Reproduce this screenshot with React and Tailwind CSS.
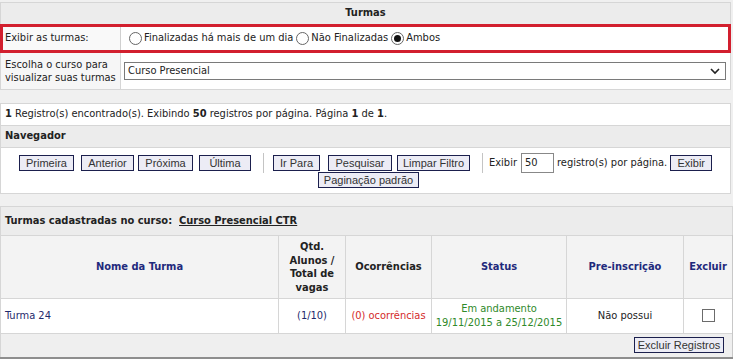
import React from "react";

const Btn = ({ children, className = "" }) => (
  <button
    className={
      "h-[16px] shrink-0 whitespace-nowrap border border-[#1b1f4d] bg-[#ececf5] text-[#333] font-['Liberation_Sans',Arial,sans-serif] text-[11px] leading-none " +
      className
    }
  >
    {children}
  </button>
);

const Radio = ({ checked }) => (
  <span className="grid place-items-center w-[13px] h-[13px] rounded-full border border-[#666] bg-white shrink-0">
    {checked && <span className="w-[7px] h-[7px] rounded-full bg-[#111]" />}
  </span>
);

const Sep = () => <span className="block w-px h-[20px] bg-[#c4c4c4]" />;

export default function App() {
  return (
    <div className="w-[733px] h-[359px] overflow-hidden bg-[#f0f0f0] font-['DejaVu_Sans_Condensed','Liberation_Sans',sans-serif] text-[11px] text-[#222]">
      {/* Form */}
      <div className="mt-[2px] border-t border-[#d6d6d6] mr-[2px]">
        <div className="h-[21px] bg-[#ececec] flex items-center justify-center font-bold text-[#222] border-x border-[#d6d6d6]">
          Turmas
        </div>
        <div className="h-[29px] border-[3px] border-[#d21f2e] flex bg-white">
          <div className="w-[118px] flex items-center pl-[2px] border-r border-[#d0d0d0] bg-[#f9f9f9]">
            Exibir as turmas:
          </div>
          <div className="flex items-center pl-[8px] gap-[2px]">
            <Radio />
            <span className="mr-[1px]">Finalizadas há mais de um dia</span>
            <Radio />
            <span className="mr-[1px]">Não Finalizadas</span>
            <Radio checked />
            <span>Ambos</span>
          </div>
        </div>
        <div className="h-[37px] flex bg-[#f6f6f6] border-x border-b border-[#d6d6d6]">
          <div className="w-[120px] flex items-center pl-[4px] leading-[13px] border-r border-[#d6d6d6]">
            Escolha o curso para visualizar suas turmas
          </div>
          <div className="flex-1 flex items-center pl-[3px] pr-[4px] bg-white">
            <div className="h-[18px] w-full border border-[#7a7a7a] bg-white flex items-center justify-between pl-[3px] pr-[5px]">
              <span>Curso Presencial</span>
              <svg width="10" height="7" viewBox="0 0 10 7">
                <polyline points="1,1 5,5 9,1" fill="none" stroke="#222" strokeWidth="1.6" />
              </svg>
            </div>
          </div>
        </div>
      </div>

      {/* Records / navigator */}
      <div className="mt-[13px] mr-[2px] border border-[#d6d6d6]">
        <div className="h-[21px] bg-white flex items-center pl-[4px]">
          <span>
            <b>1</b> Registro(s) encontrado(s). Exibindo <b>50</b> registros por página. Página <b>1</b> de <b>1</b>.
          </span>
        </div>
        <div className="h-[23px] bg-[#ececec] border-y border-[#d6d6d6] flex items-center pl-[4px] font-bold">
          Navegador
        </div>
        <div className="h-[45px] bg-white pt-[5px]">
          <div className="flex items-center h-[20px] pl-[18px] whitespace-nowrap">
            <Btn className="w-[55px]">Primeira</Btn>
            <Btn className="w-[53px] ml-[7px]">Anterior</Btn>
            <Btn className="w-[55px] ml-[4px]">Próxima</Btn>
            <Btn className="w-[52px] ml-[6px]">Última</Btn>
            <span className="ml-[12px]"><Sep /></span>
            <Btn className="w-[47px] ml-[9px]">Ir Para</Btn>
            <Btn className="w-[64px] ml-[8px]">Pesquisar</Btn>
            <Btn className="w-[73px] ml-[5px]">Limpar Filtro</Btn>
            <span className="ml-[12px]"><Sep /></span>
            <span className="ml-[6px]">Exibir</span>
            <span className="ml-[4px] w-[33px] h-[20px] shrink-0 border border-[#888] bg-white flex items-center pl-[3px]">50</span>
            <span className="ml-[3px]">registro(s) por página.</span>
            <Btn className="w-[42px] ml-[3px]">Exibir</Btn>
          </div>
          <div className="flex justify-center pl-[6px] mt-[-1px]">
            <Btn className="w-[101px]">Paginação padrão</Btn>
          </div>
        </div>
      </div>

      {/* Table */}
      <div className="mt-[12px] border-t border-[#d6d6d6]">
        <div className="h-[28px] bg-[#ececec] border-x border-[#d6d6d6] flex items-center pl-[4px] font-bold">
          Turmas cadastradas no curso:&nbsp;&nbsp;<span className="underline">Curso Presencial CTR</span>
        </div>
        <table className="border-collapse table-fixed w-[733px]">
          <colgroup>
            <col className="w-[278px]" />
            <col className="w-[67px]" />
            <col className="w-[86px]" />
            <col className="w-[135px]" />
            <col className="w-[117px]" />
            <col className="w-[50px]" />
          </colgroup>
          <tbody>
            <tr className="h-[63px] bg-[#f3f3f3] font-bold text-center">
              <td className="border border-[#d6d6d6] text-[#1f2a7c]">Nome da Turma</td>
              <td className="border border-[#d6d6d6] text-[#222] leading-[13.5px]">Qtd.<br />Alunos /<br />Total de<br />vagas</td>
              <td className="border border-[#d6d6d6] text-[#222]">Ocorrências</td>
              <td className="border border-[#d6d6d6] text-[#1f2a7c]">Status</td>
              <td className="border border-[#d6d6d6] text-[#1f2a7c]">Pre-inscrição</td>
              <td className="border border-[#d6d6d6] border-r-[3px] border-r-[#c8c8c8] text-[#1f2a7c]">Excluir</td>
            </tr>
            <tr className="h-[35px] bg-white text-center">
              <td className="border border-[#d6d6d6] text-left pl-[4px] text-[#1f2a6c]">Turma 24</td>
              <td className="border border-[#d6d6d6] text-[#1f2a6c]">(1/10)</td>
              <td className="border border-[#d6d6d6] text-[#d42a2a]">(0) ocorrências</td>
              <td className="border border-[#d6d6d6] text-[#2f8a2a] leading-[14px]">Em andamento<br />19/11/2015 a 25/12/2015</td>
              <td className="border border-[#d6d6d6]">Não possui</td>
              <td className="border border-[#d6d6d6] border-r-[3px] border-r-[#c8c8c8]">
                <span className="inline-block w-[13px] h-[13px] border border-[#6b6b6b] bg-white align-middle" />
              </td>
            </tr>
            <tr className="h-[25px] bg-[#efefef]">
              <td colSpan={6} className="border border-[#d6d6d6] border-r-[3px] border-r-[#c8c8c8] border-b-[3px] border-b-[#8e8e8e] text-right pr-[8px]">
                <Btn className="w-[90px] align-middle">Excluir Registros</Btn>
              </td>
            </tr>
          </tbody>
        </table>
      </div>
    </div>
  );
}
